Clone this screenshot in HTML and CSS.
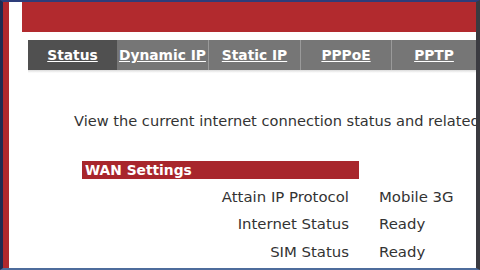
FILE: index.html
```html
<!DOCTYPE html>
<html lang="en">

<head>
    <meta charset="UTF-8">
    <meta name="viewport" content="width=device-width, initial-scale=1.0">
    <title>Internet Status</title>
    <link rel="stylesheet" href="styles.css">
</head>

<body>
    <div class="window">
        <div class="page">
            <header class="banner"></header>

            <nav class="tabs">
                <a class="tab active" href="#">Status</a>
                <a class="tab" href="#">Dynamic IP</a>
                <a class="tab" href="#">Static IP</a>
                <a class="tab" href="#">PPPoE</a>
                <a class="tab last" href="#">PPTP</a>
            </nav>
            <div class="tab-shadow"></div>

            <main class="content">
                <p class="intro">View the current internet connection status and related</p>

                <div class="section-title">WAN Settings</div>

                <div class="rows">
                    <div class="row">
                        <span class="label">Attain IP Protocol</span>
                        <span class="value">Mobile 3G</span>
                    </div>
                    <div class="row">
                        <span class="label">Internet Status</span>
                        <span class="value">Ready</span>
                    </div>
                    <div class="row">
                        <span class="label">SIM Status</span>
                        <span class="value">Ready</span>
                    </div>
                </div>
            </main>
        </div>
    </div>
</body>

</html>
```

FILE: styles.css
```css
* {
    margin: 0;
    padding: 0;
    box-sizing: border-box;
}

html,
body {
    width: 480px;
    height: 270px;
    overflow: hidden;
}

body {
    font-family: Verdana, "DejaVu Sans", sans-serif;
    font-size: 14.9px;
    color: #333;
    background: #26345e;
}

.window {
    width: 480px;
    height: 270px;
    border-top: 2px solid #2e3d7a;
    border-left: 3px solid #1f2a52;
    border-right: 4px solid #3a3a40;
    border-bottom: 2px solid #4d6c9c;
}

.page {
    height: 100%;
    background: #fff;
    border-left: 6px solid #b0282e;
    overflow: hidden;
}

.banner {
    height: 30px;
    margin-left: 13px;
    background: #b22a2e;
}

.tabs {
    display: flex;
    height: 30px;
    margin-top: 8px;
    margin-left: 19px;
    background: #767676;
}

.tab {
    display: flex;
    align-items: center;
    justify-content: center;
    color: #fff;
    font-weight: bold;
    font-size: 13.8px;
    text-decoration: underline;
    border-right: 1px solid #9a9a9a;
    width: 92px;
    white-space: nowrap;
}

.tab:first-child {
    width: 89px;
}

.tab:nth-child(4) {
    width: 91px;
}

.tab.active {
    background: #505050;
    border-right: none;
}

.tab.last {
    flex: 1;
    border-right: none;
}

.tab-shadow {
    height: 3px;
    margin-left: 19px;
    background: linear-gradient(#dcdcdc, #fff);
}

.content {
    padding-left: 65px;
}

.intro {
    margin-top: 40px;
    font-size: 14.6px;
    white-space: nowrap;
    line-height: 16px;
}

.section-title {
    width: 277px;
    height: 18px;
    margin-top: 32px;
    margin-left: 8px;
    padding-left: 3px;
    background: #a8262c;
    color: #fff;
    font-size: 13.8px;
    font-weight: bold;
    line-height: 18px;
}

.rows {
    margin-top: 4px;
}

.row {
    display: flex;
    height: 27.5px;
    align-items: center;
}

.label {
    width: 275px;
    text-align: right;
}

.value {
    margin-left: 30px;
}
```
